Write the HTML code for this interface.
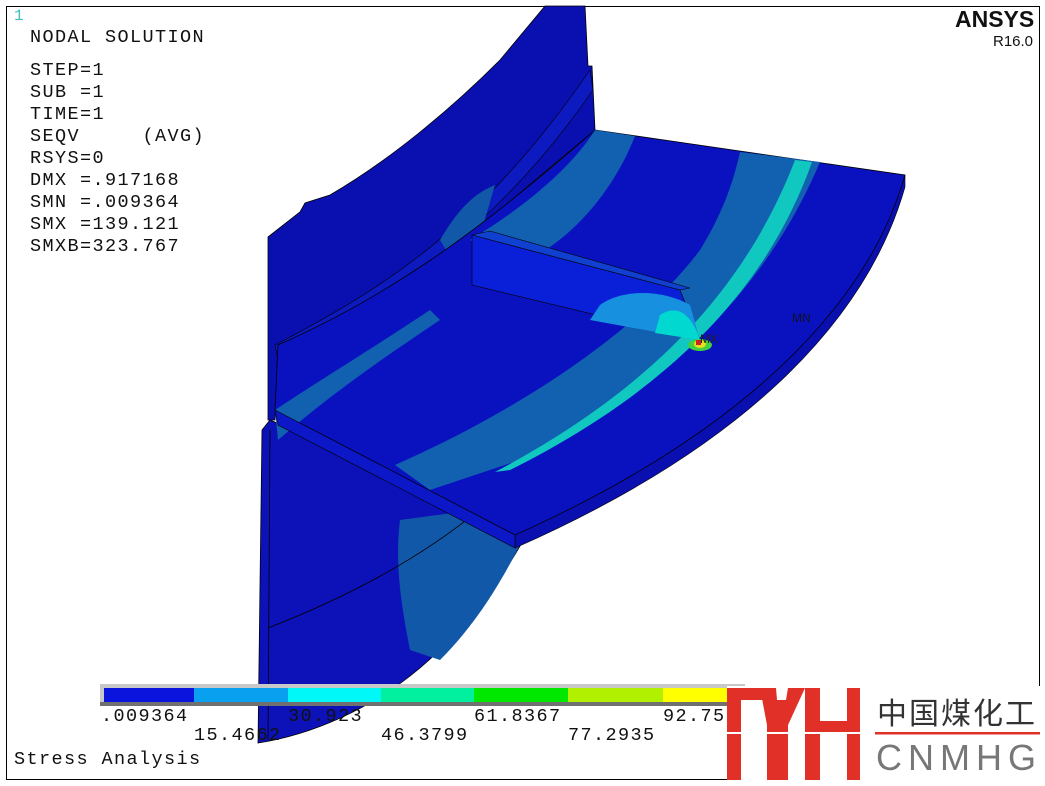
<!DOCTYPE html>
<html><head><meta charset="utf-8"><style>
html,body{margin:0;padding:0;background:#fff;}
body{width:1045px;height:786px;position:relative;overflow:hidden;font-family:"Liberation Mono",monospace;}
.t{position:absolute;font-size:18.5px;color:#111;white-space:pre;line-height:22px;letter-spacing:1.4px;}
</style></head><body>
<svg width="1045" height="786" style="position:absolute;left:0;top:0">
<rect x="6.5" y="6.5" width="1033" height="773" fill="none" stroke="#000" stroke-width="1"/>
<path d="M270 420 L530 528 C505 575 470 625 420 668 C370 710 310 735 258 743 L262 430 Z" fill="#0d12b8" stroke="#000" stroke-width="0.8"/>
<path d="M400 520 L460 512 L525 535 C505 575 480 620 440 660 L410 650 C400 600 395 560 400 520Z" fill="#1258a8"/>
<path d="M270 430 L268 740" stroke="#000" stroke-width="0.8"/>
<path d="M268 628 C340 600 420 560 485 505" stroke="#000" fill="none" stroke-width="0.8"/>
<path d="M268 237 L300 212 L305 203 L330 195 C390 160 450 110 500 60 L545 6 L585 6 L588 66 L592 66 L595 130 L470 235 L278 345 L275 420 L268 420 Z" fill="#0a10b0" stroke="#000" stroke-width="0.8"/>
<path d="M275 345 C380 290 480 230 590 70 L593 90 C490 240 380 300 278 360 Z" fill="#0d1ac0" stroke="#000" stroke-width="0.6"/>
<path d="M440 240 C455 215 470 195 495 185 L470 270 L455 265 Z" fill="#1258a8"/>
<path d="M595 130 L905 175 C870 300 750 430 515 535 L275 410 L278 345 C380 300 470 240 595 130 Z" fill="#0a12c0" stroke="#000" stroke-width="0.8"/>
<path d="M595 130 L635 136 C610 200 560 250 515 265 L470 240 C520 210 570 170 595 130Z" fill="#1260b0"/>
<path d="M740 152 L820 162 C770 280 680 380 520 460 L430 490 L395 465 C520 410 640 330 700 250 C725 210 735 175 740 152Z" fill="#1260b0"/>
<path d="M795 160 L812 162 C770 280 680 385 510 470 L495 472 C650 390 745 290 795 160Z" fill="#10c8c0"/>
<path d="M275 410 C320 380 370 350 430 310 L440 320 C380 360 330 395 278 440Z" fill="#1260b0"/>
<path d="M905 175 L905 187 C870 310 760 440 515 548 L515 535 C750 430 870 300 905 175Z" fill="#0a10b0" stroke="#000" stroke-width="0.6"/>
<path d="M275 410 L515 535 L515 548 L278 425Z" fill="#0c18c8" stroke="#000" stroke-width="0.6"/>
<path d="M472 235 L680 290 L700 340 L472 285 Z" fill="#0a20d8" stroke="#000" stroke-width="0.6"/>
<path d="M600 305 C620 290 660 288 690 305 L700 340 L590 320 Z" fill="#1890e0"/>
<path d="M660 315 C675 305 690 310 700 340 L655 333 Z" fill="#00d8d0"/>
<path d="M472 235 L490 231 L690 288 L680 290 Z" fill="#1040d0" stroke="#000" stroke-width="0.6"/>
<ellipse cx="700" cy="345" rx="12" ry="6" fill="#40d040"/>
<ellipse cx="700" cy="344" rx="6" ry="4" fill="#e0e020"/>
<rect x="696" y="340" width="5" height="5" fill="#d02020"/>
<text x="700" y="343" font-family="Liberation Sans" font-size="12" fill="#222">MX</text>
<text x="792" y="322" font-family="Liberation Sans" font-size="12" fill="#112">MN</text>
<rect x="100" y="684" width="645" height="22" fill="#c8c8c8"/>
<rect x="100" y="702" width="645" height="4" fill="#707070"/>
<rect x="104" y="688" width="90" height="14" fill="#0a14dc"/>
<rect x="194" y="688" width="94" height="14" fill="#0aa0f0"/>
<rect x="288" y="688" width="93" height="14" fill="#00f8f8"/>
<rect x="381" y="688" width="93" height="14" fill="#00f0a0"/>
<rect x="474" y="688" width="94" height="14" fill="#00e800"/>
<rect x="568" y="688" width="95" height="14" fill="#b0f000"/>
<rect x="663" y="688" width="82" height="14" fill="#ffff00"/>
<rect x="727" y="686" width="313" height="94" fill="#fff"/>
<g fill="#e03028">
<rect x="727" y="688" width="14" height="92"/>
<rect x="727" y="688" width="36" height="12"/>
<path d="M760 688 L776 688 L777 700 L786 700 L788 688 L805 688 L788 725 L788 780 L767 780 L767 725 Z"/>
<rect x="805" y="688" width="15" height="92"/>
<rect x="847" y="688" width="13" height="92"/>
<rect x="805" y="721" width="55" height="12"/>
</g>
<rect x="727" y="732" width="133" height="2" fill="#fff"/>
<rect x="875" y="732" width="165" height="2.5" fill="#e03028"/>
</svg>
<div class="t" style="left:14px;top:5px;color:#40c0c0;font-size:16px">1</div>
<div class="t" style="left:30px;top:27px">NODAL SOLUTION</div>
<div class="t" style="left:30px;top:60px">STEP=1
SUB =1
TIME=1
SEQV     (AVG)
RSYS=0
DMX =.917168
SMN =.009364
SMX =139.121
SMXB=323.767</div>
<div style="position:absolute;left:955px;top:6px;font-family:'Liberation Sans',sans-serif;font-weight:bold;font-size:23px;color:#111">ANSYS</div>
<div style="position:absolute;left:993px;top:33px;font-family:'Liberation Sans',sans-serif;font-size:15px;color:#111">R16.0</div>
<div class="t" style="left:101px;top:706px">.009364</div>
<div class="t" style="left:288px;top:706px">30.923</div>
<div class="t" style="left:474px;top:706px">61.8367</div>
<div class="t" style="left:663px;top:706px">92.75</div>
<div class="t" style="left:194px;top:725px">15.4662</div>
<div class="t" style="left:381px;top:725px">46.3799</div>
<div class="t" style="left:568px;top:725px">77.2935</div>
<div class="t" style="left:14px;top:749px">Stress Analysis</div>
<div style="position:absolute;left:877px;top:694px;font-family:'Noto Sans CJK SC',sans-serif;font-size:30px;color:#333;line-height:34px;letter-spacing:2px">中国煤化工</div>
<div style="position:absolute;left:876px;top:738px;font-family:'Liberation Sans',sans-serif;font-size:36px;color:#777;line-height:40px;letter-spacing:6px">CNMHG</div>
</body></html>
